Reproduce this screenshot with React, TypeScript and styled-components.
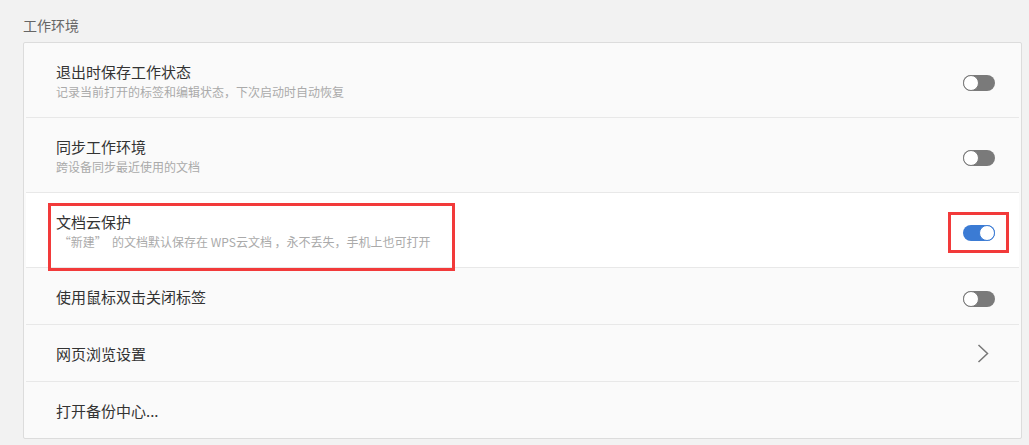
import React from "react";
import styled, { createGlobalStyle } from "styled-components";

const Global = createGlobalStyle`
  html, body { margin: 0; padding: 0; background: #f2f2f2; }
  body { font-family: "Noto Sans CJK SC", "Microsoft YaHei", sans-serif; }
  * { box-sizing: border-box; }
`;

const Page = styled.div`
  padding: 15px 7px 0 23px;
  width: 1029px;
  height: 445px;
  overflow: hidden;
`;

const SectionTitle = styled.div`
  font-size: 14px;
  line-height: 20px;
  color: #666;
  margin-bottom: 7px;
`;

const Card = styled.div`
  background: #fafafa;
  border: 1px solid #dcdcdc;
  border-radius: 2px;
  padding: 0 2px;
  display: flex;
  flex-direction: column;
`;

const Row = styled.div<{ $tall?: boolean; $active?: boolean; $last?: boolean }>`
  position: relative;
  display: flex;
  align-items: ${(p) => (p.$tall ? "flex-start" : "center")};
  height: ${(p) => (p.$tall ? 75 : p.$last ? 56 : 57)}px;
  background: ${(p) => (p.$active ? "#ffffff" : "#fafafa")};
  border-bottom: ${(p) => (p.$last ? "none" : "1px solid #e8e8e8")};
  padding: 0 24px 0 30px;
`;

const TextCol = styled.div<{ $tall?: boolean }>`
  flex: 1;
  display: flex;
  flex-direction: column;
  padding-top: ${(p) => (p.$tall ? 18 : 0)}px;
`;

const Title = styled.div`
  font-size: 15px;
  line-height: 21px;
  color: #333;
`;

const Sub = styled.div`
  font-size: 12px;
  line-height: 18px;
  margin-top: 1px;
  color: #aaaaaa;
  white-space: pre;
`;

const Control = styled.div`
  align-self: center;
  margin-top: 5px;
  display: flex;
  align-items: center;
`;

const Track = styled.div<{ $on?: boolean }>`
  position: relative;
  width: 32px;
  height: 16px;
  border-radius: 8px;
  background: ${(p) => (p.$on ? "#3b7bd4" : "#7a7a7a")};
`;

const Knob = styled.div<{ $on?: boolean }>`
  position: absolute;
  top: 0;
  left: ${(p) => (p.$on ? 16 : 0)}px;
  width: 16px;
  height: 16px;
  border-radius: 50%;
  background: #fff;
  border: 1px solid ${(p) => (p.$on ? "#3b7bd4" : "#7a7a7a")};
`;

const Mark = styled.div<{ $l?: number; $r?: number; $t: number; $w: number; $h: number }>`
  position: absolute;
  ${(p) => (p.$l !== undefined ? `left: ${p.$l}px;` : "")}
  ${(p) => (p.$r !== undefined ? `right: ${p.$r}px;` : "")}
  top: ${(p) => p.$t}px;
  width: ${(p) => p.$w}px;
  height: ${(p) => p.$h}px;
  border: 3px solid #f23a3a;
  z-index: 2;
  pointer-events: none;
`;

const Chevron = styled.svg`
  display: block;
  margin-top: -5px;
  margin-right: 6px;
`;

function Toggle({ on }: { on?: boolean }) {
  return (
    <Track $on={on}>
      <Knob $on={on} />
    </Track>
  );
}

export default function App() {
  return (
    <>
      <Global />
      <Page>
        <SectionTitle>工作环境</SectionTitle>
        <Card>
          <Row $tall>
            <TextCol $tall>
              <Title>退出时保存工作状态</Title>
              <Sub>记录当前打开的标签和编辑状态，下次启动时自动恢复</Sub>
            </TextCol>
            <Control>
              <Toggle />
            </Control>
          </Row>
          <Row $tall>
            <TextCol $tall>
              <Title>同步工作环境</Title>
              <Sub>跨设备同步最近使用的文档</Sub>
            </TextCol>
            <Control>
              <Toggle />
            </Control>
          </Row>
          <Row $tall $active>
            <TextCol $tall>
              <Title>文档云保护</Title>
              <Sub>{" “新建”  的文档默认保存在 WPS云文档 ，永不丢失，手机上也可打开"}</Sub>
            </TextCol>
            <Control>
              <Toggle on />
            </Control>
            <Mark $l={22} $t={10} $w={407} $h={68} />
            <Mark $r={10} $t={19} $w={61} $h={41} />
          </Row>
          <Row>
            <TextCol>
              <Title>使用鼠标双击关闭标签</Title>
            </TextCol>
            <Control>
              <Toggle />
            </Control>
          </Row>
          <Row>
            <TextCol>
              <Title>网页浏览设置</Title>
            </TextCol>
            <Control>
              <Chevron width="12" height="19" viewBox="0 0 12 19">
                <polyline points="1.5,1 10.5,9.5 1.5,18" fill="none" stroke="#777" strokeWidth="1.5" />
              </Chevron>
            </Control>
          </Row>
          <Row $last>
            <TextCol>
              <Title>打开备份中心...</Title>
            </TextCol>
          </Row>
        </Card>
      </Page>
    </>
  );
}
